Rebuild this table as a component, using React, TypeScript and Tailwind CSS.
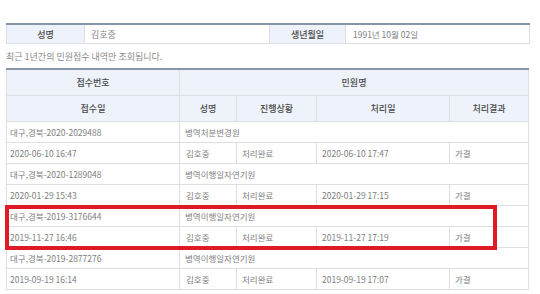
import React from "react";

const font = { fontFamily: '"Noto Sans CJK KR", "Noto Sans", sans-serif' };

type Rec = { no: string; title: string; date: string; name: string; status: string; done: string; result: string };

const rows: Rec[] = [
  { no: "대구,경북-2020-2029488", title: "병역처분변경원", date: "2020-06-10 16:47", name: "김호중", status: "처리완료", done: "2020-06-10 17:47", result: "가결" },
  { no: "대구,경북-2020-1289048", title: "병역이행일자연기원", date: "2020-01-29 15:43", name: "김호중", status: "처리완료", done: "2020-01-29 17:15", result: "가결" },
  { no: "대구,경북-2019-3176644", title: "병역이행일자연기원", date: "2019-11-27 16:46", name: "김호중", status: "처리완료", done: "2019-11-27 17:19", result: "가결" },
  { no: "대구,경북-2019-2877276", title: "병역이행일자연기원", date: "2019-09-19 16:14", name: "김호중", status: "처리완료", done: "2019-09-19 17:07", result: "가결" },
];

const th = "flex items-center justify-center bg-[#eef3fb] text-[#4a4a4a] font-medium border-r border-[#dcdfe4]";
const td = "flex items-center text-[#808080] border-r border-[#dcdfe4] overflow-hidden whitespace-nowrap";

export default function App() {
  return (
    <div className="relative w-[540px] h-[294px] bg-white text-[9px] leading-none" style={font}>
      <div className="pt-[23px] pl-[6px]">
        {/* top info table */}
        <div className="flex w-[524px] h-[21px] border-t-2 border-t-[#8795aa] border-b border-b-[#dcdfe4]">
          <div className={`${th} w-[79px] border-l border-l-[#dcdfe4]`}>성명</div>
          <div className={`${td} w-[185px] pl-[6px]`}>김호중</div>
          <div className={`${th} w-[76px]`}>생년월일</div>
          <div className={`${td} w-[184px] pl-[7px] text-[8.5px]`}>1991년 10월 02일</div>
        </div>
        <div className="h-[24px] flex items-center text-[#8a8a8a] text-[9px]">최근 1년간의 민원접수 내역만 조회됩니다.</div>
        {/* main table */}
        <div className="w-[523px] border-t-2 border-t-[#8795aa]">
          <div className="flex h-[26px] border-b border-[#dcdfe4]">
            <div className={`${th} w-[174px] border-l border-l-[#dcdfe4]`}>접수번호</div>
            <div className={`${th} w-[349px]`}>민원명</div>
          </div>
          <div className="flex h-[26px] border-b border-[#dcdfe4]">
            <div className={`${th} w-[174px] border-l border-l-[#dcdfe4]`}>접수일</div>
            <div className={`${th} w-[57px]`}>성명</div>
            <div className={`${th} w-[80px]`}>진행상황</div>
            <div className={`${th} w-[133px]`}>처리일</div>
            <div className={`${th} w-[79px]`}>처리결과</div>
          </div>
          {rows.map((r) => (
            <React.Fragment key={r.no}>
              <div className="flex h-[21px] border-b border-[#dcdfe4] text-[8.5px]">
                <div className={`${td} w-[174px] pl-[3px] border-l border-l-[#dcdfe4] text-[#56609f]`}>{r.no}</div>
                <div className={`${td} w-[349px] pl-[5px] text-[#56609f]`}>{r.title}</div>
              </div>
              <div className="flex h-[21px] border-b border-[#dcdfe4] text-[8.5px]">
                <div className={`${td} w-[174px] pl-[3px] border-l border-l-[#dcdfe4]`}>{r.date}</div>
                <div className={`${td} w-[57px] pl-[6px]`}>{r.name}</div>
                <div className={`${td} w-[80px] pl-[5px]`}>{r.status}</div>
                <div className={`${td} w-[133px] pl-[5px]`}>{r.done}</div>
                <div className={`${td} w-[79px] pl-[5px]`}>{r.result}</div>
              </div>
            </React.Fragment>
          ))}
        </div>
      </div>
      {/* red highlight box */}
      <div className="absolute left-[5px] top-[205px] w-[492px] h-[45px] border-[4px] border-[#dd1a26]" />
    </div>
  );
}
